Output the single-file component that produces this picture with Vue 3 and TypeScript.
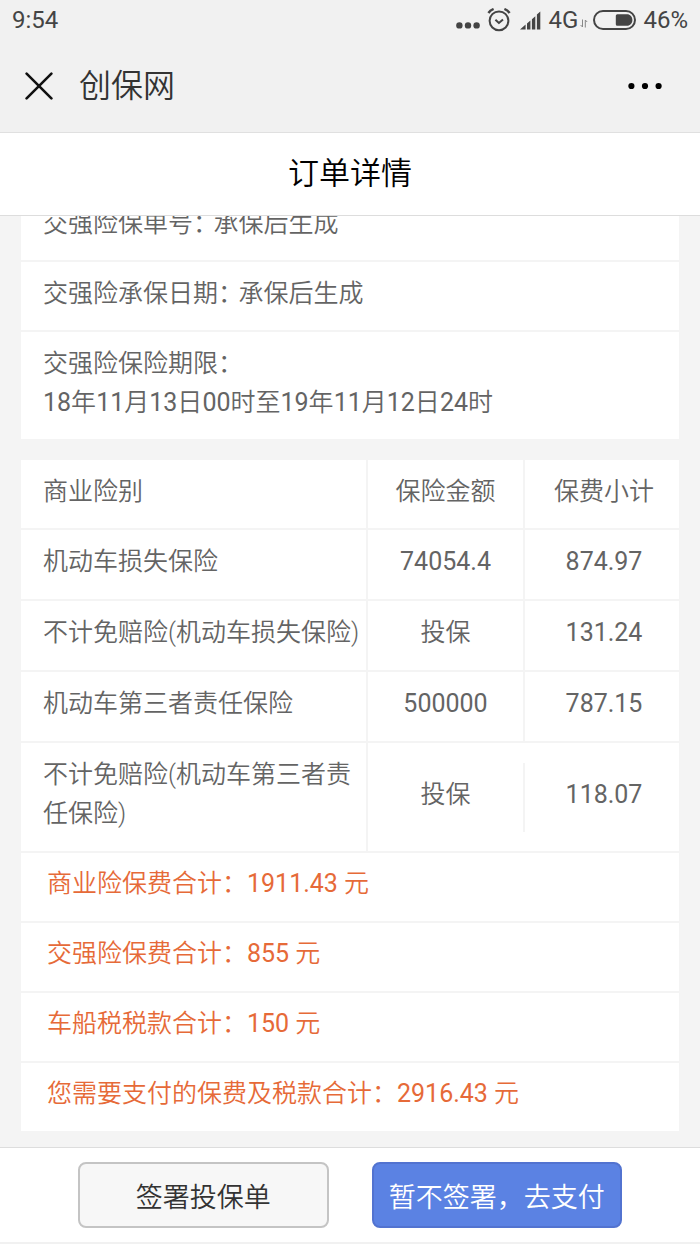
<script setup lang="ts">
interface Info {
  label: string
  value: string
  stacked?: boolean
}

interface Coverage {
  name: string
  amount: string
  premium: string
}

interface Total {
  label: string
  value: string
}

interface Run {
  text: string
  figure: boolean
}

const infos: Info[] = [
  { label: '交强险保单号：', value: '承保后生成' },
  { label: '交强险承保日期：', value: '承保后生成' },
  { label: '交强险保险期限：', value: '18年11月13日00时至19年11月12日24时', stacked: true },
]

const coverages: Coverage[] = [
  { name: '机动车损失保险', amount: '74054.4', premium: '874.97' },
  { name: '不计免赔险(机动车损失保险)', amount: '投保', premium: '131.24' },
  { name: '机动车第三者责任保险', amount: '500000', premium: '787.15' },
  { name: '不计免赔险(机动车第三者责任保险)', amount: '投保', premium: '118.07' },
]

const totals: Total[] = [
  { label: '商业险保费合计：', value: '1911.43 元' },
  { label: '交强险保费合计：', value: '855 元' },
  { label: '车船税税款合计：', value: '150 元' },
  { label: '您需要支付的保费及税款合计：', value: '2916.43 元' },
]

// Figures are set a little heavier than the Chinese text around them.
function runs(text: string): Run[] {
  return text
    .split(/([\d.]+)/)
    .filter((part) => part !== '')
    .map((part) => ({ text: part, figure: /^[\d.]+$/.test(part) }))
}
</script>

<template>
  <div class="page">
    <header class="top">
      <div class="status">
        <span class="time">9:54</span>
        <svg class="dots" width="24" height="20" viewBox="0 0 24 20" aria-hidden="true">
          <circle cx="3.4" cy="15.4" r="3.2" />
          <circle cx="12" cy="15.4" r="3.2" />
          <circle cx="20.6" cy="15.4" r="3.2" />
        </svg>
        <svg class="alarm" width="24" height="24" viewBox="0 0 24 24" aria-hidden="true">
          <circle cx="12" cy="12.8" r="9.4" />
          <path class="bells" d="M1.4 5C2.6 3.2 4.4 1.9 6.6 1M22.6 5C21.4 3.2 19.6 1.9 17.4 1" />
          <path d="M8.4 11.8l3.5 3.2L16 11.4" />
        </svg>
        <svg class="signal" width="21" height="19" viewBox="0 0 21 19" aria-hidden="true">
          <path d="M0 18.6L5.6 13.6v5zM7 12.6l3.4-3v9H7zM11.9 8.2l3.4-3v13.4h-3.4zM16.9 3.4l3.4-3v18.2h-3.4z" />
        </svg>
        <span class="network">4G</span>
        <svg class="arrows" width="8" height="9" viewBox="0 0 8 9" aria-hidden="true">
          <path d="M2.5 0.5v7.5L0.6 6M5.3 8.5V1l1.9 2" />
        </svg>
        <svg class="battery" width="43" height="20" viewBox="0 0 43 20" aria-hidden="true">
          <rect class="shell" x="1" y="1" width="41" height="18" rx="9" />
          <path d="M24.3 4.2H34c3.2 0 5.4 2.6 5.4 5.8s-2.2 5.8-5.4 5.8h-9.7a1.5 1.5 0 0 1-1.5-1.5V5.7a1.5 1.5 0 0 1 1.5-1.5z" />
        </svg>
        <span>46%</span>
      </div>
      <nav class="nav">
        <button class="icon-button" type="button" aria-label="关闭">
          <svg width="28" height="28" viewBox="0 0 28 28">
            <path d="M1.6 1.6l24.8 24.8M26.4 1.6L1.6 26.4" />
          </svg>
        </button>
        <span class="site">创保网</span>
        <button class="icon-button more" type="button" aria-label="更多">
          <svg width="34" height="8" viewBox="0 0 34 8">
            <circle cx="3.4" cy="4" r="3.1" />
            <circle cx="17" cy="4" r="3.1" />
            <circle cx="30.6" cy="4" r="3.1" />
          </svg>
        </button>
      </nav>
      <h1 class="title">订单详情</h1>
    </header>

    <main class="content">
      <section class="card">
        <p v-for="info in infos" :key="info.label" class="row info" :class="{ stacked: info.stacked }">
          <span class="label">{{ info.label }}</span>
          <span><span v-for="(run, i) in runs(info.value)" :key="i" :class="{ figure: run.figure }">{{ run.text }}</span></span>
        </p>
      </section>

      <section class="card">
        <table class="coverage">
          <thead>
            <tr>
              <th class="name" scope="col">商业险别</th>
              <th class="amount" scope="col"><div class="divided">保险金额</div></th>
              <th class="premium" scope="col">保费小计</th>
            </tr>
          </thead>
          <tbody>
            <tr v-for="item in coverages" :key="item.name">
              <td class="name">{{ item.name }}</td>
              <td class="amount">
                <div class="divided">
                  <span v-for="(run, i) in runs(item.amount)" :key="i" :class="{ figure: run.figure }">{{ run.text }}</span>
                </div>
              </td>
              <td class="premium"><span class="figure">{{ item.premium }}</span></td>
            </tr>
          </tbody>
        </table>
        <p v-for="total in totals" :key="total.label" class="row total">
          <span>{{ total.label }}</span><span v-for="(run, i) in runs(total.value)" :key="i" :class="{ figure: run.figure }">{{ run.text }}</span>
        </p>
      </section>
    </main>

    <footer class="actions">
      <button class="action" type="button">签署投保单</button>
      <button class="action primary" type="button">暂不签署，去支付</button>
    </footer>
  </div>
</template>

<style>
body {
  margin: 0;
}
</style>

<style scoped>
.page {
  display: flex;
  flex-direction: column;
  min-height: 100vh;
  box-sizing: border-box;
  background: #f4f4f4;
  color: #646464;
  font-family: Roboto, "Noto Sans CJK SC", sans-serif;
  font-size: 25px;
  font-weight: 350;
  line-height: 39px;
}

.figure {
  font-weight: 400;
}

.top {
  position: relative;
  z-index: 1;
  background: #f1f1f1;
}

.status {
  display: flex;
  align-items: center;
  height: 40px;
  padding: 0 12px;
  color: #444;
  font-size: 24px;
  font-weight: 400;
  line-height: 40px;
}

.status svg {
  fill: #444;
}

.time {
  margin-right: auto;
}

.status .alarm {
  margin-left: 7px;
  fill: none;
  stroke: #444;
  stroke-width: 2;
}

.status .bells {
  stroke-width: 2.4;
}

.signal {
  margin: 0 8px 0 9px;
}

.status .arrows {
  align-self: flex-end;
  margin: 0 5px 12px 2px;
  fill: none;
  stroke: #888;
}

.battery {
  margin-right: 7px;
}

.status .shell {
  fill: none;
  stroke: #444;
  stroke-width: 2;
}

.nav {
  display: flex;
  align-items: center;
  height: 92px;
  padding: 0 38px 0 25px;
  border-bottom: 1px solid #e0e0e0;
}

.icon-button {
  display: flex;
  padding: 0;
  border: 0;
  background: none;
}

.icon-button path {
  stroke: #111;
  stroke-width: 2.6;
  stroke-linecap: round;
}

.more {
  margin-left: auto;
}

.site {
  margin-left: 26px;
  color: #333;
  font-size: 32px;
}

.title {
  margin: 0;
  border-bottom: 1px solid #ddd;
  background: #fff;
  color: #000;
  font-size: 31px;
  font-weight: 350;
  line-height: 82px;
  text-align: center;
}

/* The list is scrolled so that its first row lies partly under the header. */
.content {
  display: flex;
  flex: 1;
  flex-direction: column;
  gap: 21px;
  margin-top: -24px;
  padding: 0 21px 16px;
}

.card {
  background: #fff;
}

.row {
  margin: 0;
  padding: 12px 22px 17px;
  border-bottom: 2px solid #f4f4f4;
}

.row:last-child {
  border-bottom: 0;
}

.info {
  display: flex;
  flex-wrap: wrap;
  gap: 0 8px;
}

.label {
  font-feature-settings: "halt";
}

.stacked {
  flex-direction: column;
}

.coverage {
  width: 100%;
  border-spacing: 0;
  table-layout: fixed;
}

.coverage th,
.coverage td {
  padding: 12px 0 18px;
  border-bottom: 2px solid #f4f4f4;
  font-weight: 350;
  text-align: center;
}

.coverage .name {
  padding-left: 22px;
  border-right: 2px solid #f4f4f4;
  text-align: left;
}

.coverage .amount {
  width: 157px;
  padding: 0;
}

.coverage .premium {
  width: 150px;
  padding-left: 4px;
}

.divided {
  padding: 12px 0 18px;
  border-right: 2px solid #f4f4f4;
}

.coverage th,
.coverage th .divided {
  padding-bottom: 17px;
}

.total {
  padding: 11px 26px 18px;
  color: #e66a38;
}

.actions {
  display: flex;
  gap: 43px;
  padding: 14px 78px;
  border-top: 1px solid #ddd;
  border-bottom: 2px solid #f1f1f1;
  background: #fff;
}

.action {
  flex: 1;
  height: 66px;
  padding: 0;
  border: 2px solid #c4c4c4;
  border-radius: 8px;
  background: #f7f7f7;
  color: #333;
  font-family: inherit;
  font-size: 27px;
  font-weight: 350;
  white-space: nowrap;
}

.primary {
  border-color: #5273d0;
  background: #5b82e3;
  color: #fff;
}
</style>
